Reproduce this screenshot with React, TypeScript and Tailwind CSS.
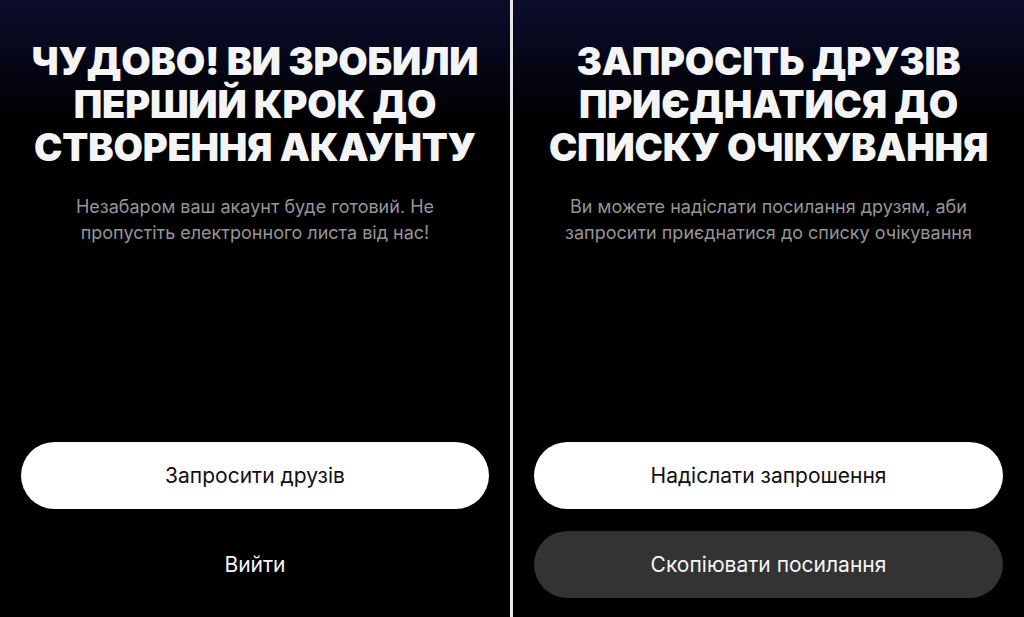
import React from 'react';

const font = { fontFamily: 'Inter, "Noto Sans", sans-serif' };

function Panel({
  title,
  text,
  primary,
  secondary,
  secondaryFilled,
}: {
  title: string[];
  text: string[];
  primary: string;
  secondary: string;
  secondaryFilled?: boolean;
}) {
  return (
    <div className="flex h-full flex-1 flex-col bg-[linear-gradient(180deg,#0b0e2a_0%,#080a22_6%,#03040e_13%,#000000_20%,#000000_100%)] px-[21px] pb-[19px] pt-[40px]">
      <h1 className="text-center text-[38px] font-black uppercase leading-[43px] tracking-[-0.005em] text-[#f4f4f4]">
        {title.map((line) => (
          <div key={line}>{line}</div>
        ))}
      </h1>
      <p className="mt-[25px] text-center text-[18px] leading-[26px] text-[#959595]">
        {text.map((line) => (
          <span key={line} className="block">
            {line}
          </span>
        ))}
      </p>
      <div className="mt-auto flex flex-col gap-[22px]">
        <button className="flex h-[67px] w-full items-center justify-center rounded-full bg-white text-[21px] text-[#111111]">
          {primary}
        </button>
        <button
          className={`flex h-[67px] w-full items-center justify-center rounded-full text-[21px] text-[#f5f5f5] ${
            secondaryFilled ? 'bg-[#333333]' : 'bg-transparent'
          }`}
        >
          {secondary}
        </button>
      </div>
    </div>
  );
}

export default function App() {
  return (
    <div className="flex h-[617px] w-[1024px] overflow-hidden bg-black" style={font}>
      <div className="flex w-[510px]">
        <Panel
          title={['Чудово! Ви зробили', 'перший крок до', 'створення акаунту']}
          text={['Незабаром ваш акаунт буде готовий. Не', 'пропустіть електронного листа від нас!']}
          primary="Запросити друзів"
          secondary="Вийти"
        />
      </div>
      <div className="w-[3px] bg-[#e8e8e8]" />
      <div className="flex flex-1">
        <Panel
          title={['Запросіть друзів', 'приєднатися до', 'списку очікування']}
          text={['Ви можете надіслати посилання друзям, аби', 'запросити приєднатися до списку очікування']}
          primary="Надіслати запрошення"
          secondary="Скопіювати посилання"
          secondaryFilled
        />
      </div>
    </div>
  );
}
